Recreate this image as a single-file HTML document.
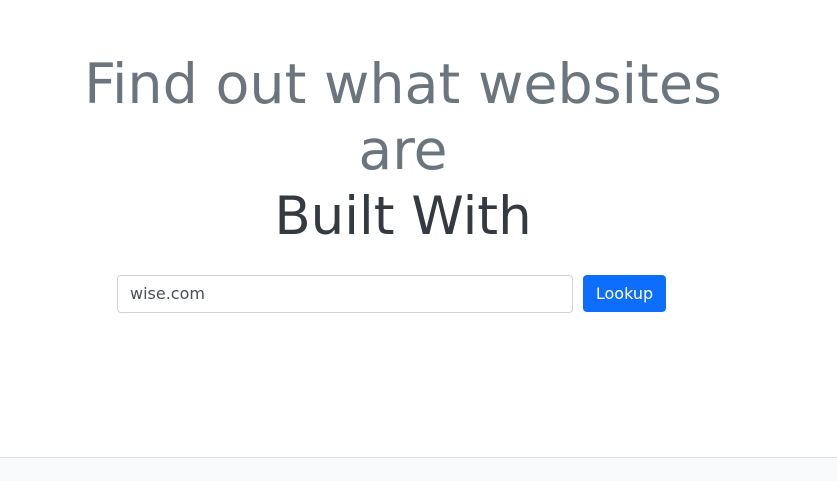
<!DOCTYPE html>
<html><head><style>
html,body{margin:0;padding:0;background:#fff;width:837px;height:480px;overflow:hidden;font-family:"DejaVu Sans","Liberation Sans",sans-serif}
.h{position:absolute;left:0;width:806px;text-align:center;font-size:55px;color:#6c757d;line-height:67px;letter-spacing:0;white-space:nowrap}
.inp{position:absolute;left:117px;top:275px;width:454px;height:36px;border:1px solid #ced4da;border-radius:4px;box-sizing:content-box}
.inp span{position:absolute;left:12px;top:8px;font-size:16px;color:#495057}
.btn{position:absolute;left:583px;top:275px;width:83px;height:37px;background:#0d6efd;border-radius:4px;color:#fff;font-size:16px;text-align:center;line-height:37px}
.foot{position:absolute;left:0;top:457px;width:837px;height:23px;background:#f8f9fa;border-top:1px solid #dee2e6}
</style></head><body>
<div class="h" style="top:51px;font-size:55.5px">Find out what websites</div>
<div class="h" style="top:117px">are</div>
<div class="h" style="top:183px;color:#343a40;font-size:53px">Built With</div>
<div class="inp"><span>wise.com</span></div>
<div class="btn">Lookup</div>
<div class="foot"></div>
</body></html>
